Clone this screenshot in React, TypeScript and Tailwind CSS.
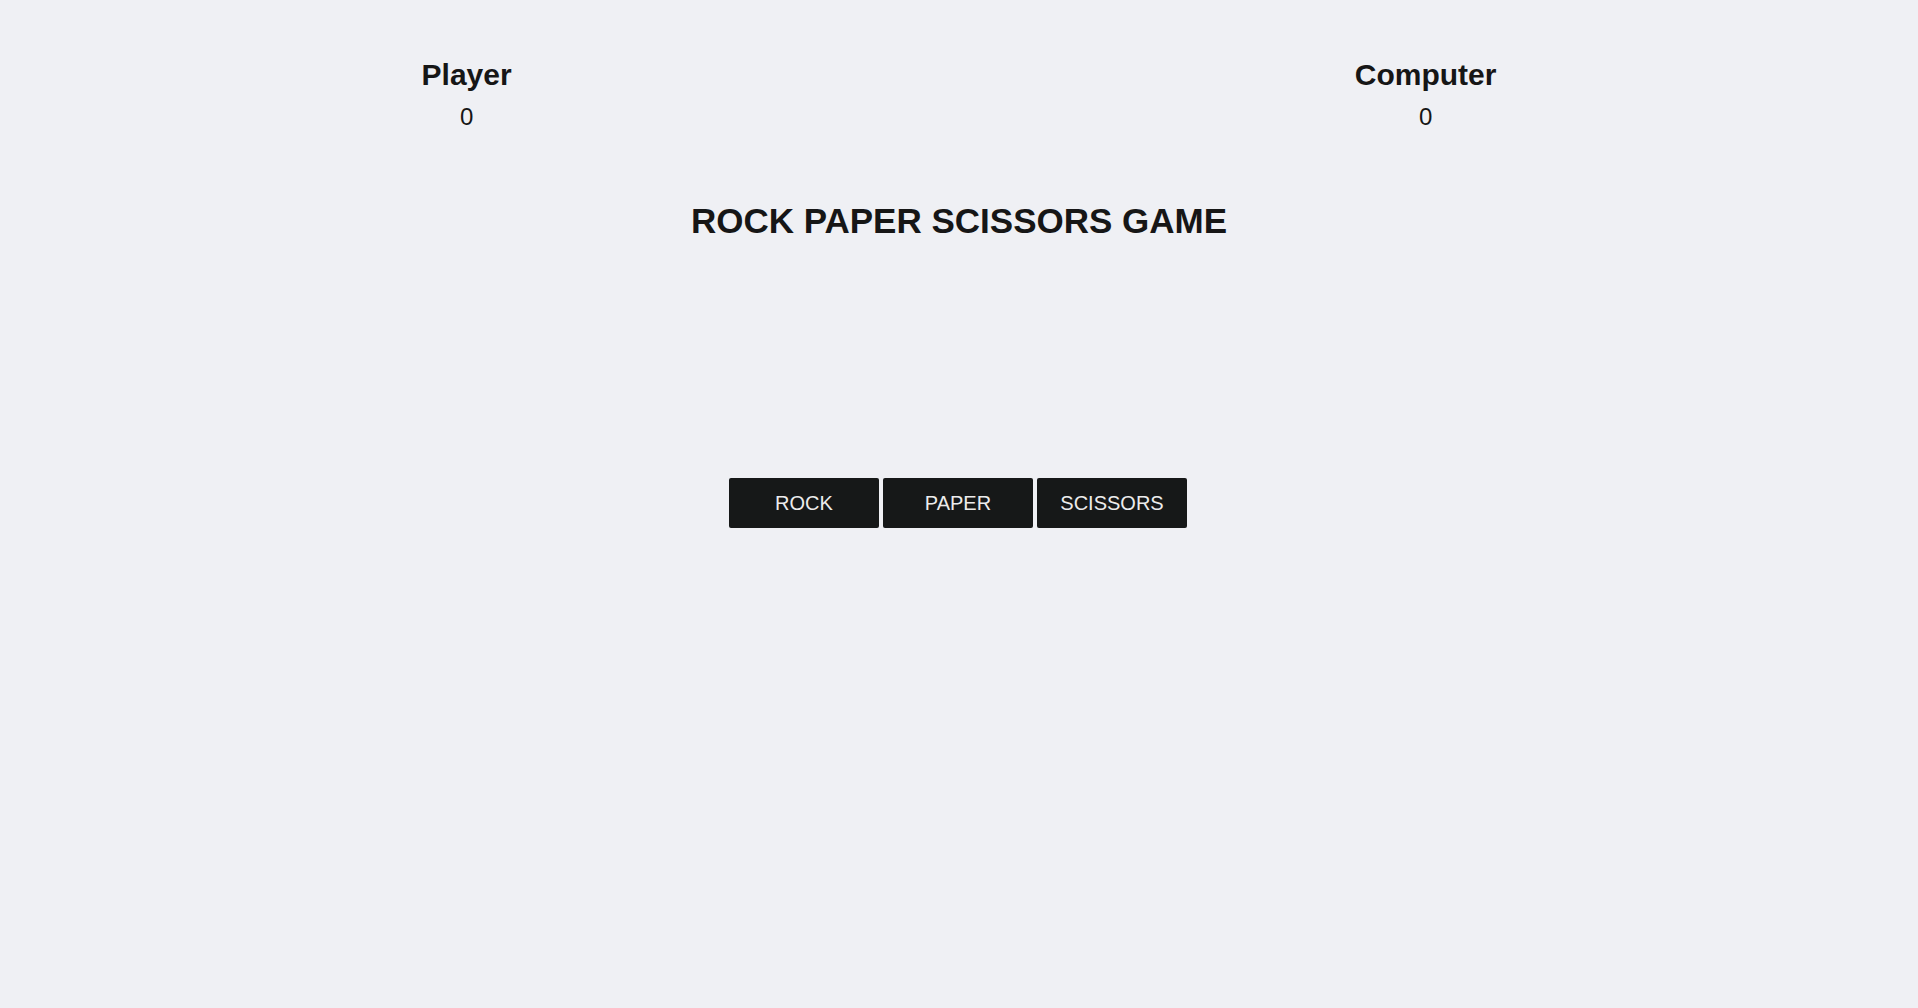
import React, { useState } from 'react';

const choices = ['ROCK', 'PAPER', 'SCISSORS'];

export default function App() {
  const [playerScore, setPlayerScore] = useState(0);
  const [computerScore, setComputerScore] = useState(0);
  const [result, setResult] = useState('');

  const play = (choice: string) => {
    const pick = choices[Math.floor(Math.random() * 3)];
    if (pick === choice) {
      setResult(`Both picked ${choice}. It's a tie!`);
      return;
    }
    const wins =
      (choice === 'ROCK' && pick === 'SCISSORS') ||
      (choice === 'PAPER' && pick === 'ROCK') ||
      (choice === 'SCISSORS' && pick === 'PAPER');
    if (wins) {
      setPlayerScore((s) => s + 1);
      setResult(`${choice} beats ${pick}. You win!`);
    } else {
      setComputerScore((s) => s + 1);
      setResult(`${pick} beats ${choice}. You lose!`);
    }
  };

  return (
    <div className="min-h-screen w-full bg-[#eff0f4] text-[#161616] font-['Liberation_Sans',Arial,sans-serif]">
      {/* Scoreboard */}
      <div className="flex justify-around pt-[58px]">
        <div className="flex flex-col items-center">
          <h2 className="text-[30px] font-bold leading-[1.15]">Player</h2>
          <p className="mt-[10px] text-[24px] leading-[1.15]">{playerScore}</p>
        </div>
        <div className="flex flex-col items-center">
          <h2 className="text-[30px] font-bold leading-[1.15]">Computer</h2>
          <p className="mt-[10px] text-[24px] leading-[1.15]">{computerScore}</p>
        </div>
      </div>

      <h1 className="mt-[71px] text-center text-[35px] font-bold leading-[1.15]">ROCK PAPER SCISSORS GAME</h1>

      <div className="flex h-[237px] items-center justify-center text-[22px]">{result}</div>

      <div className="flex justify-center gap-[4px] pr-[2px]">
        {choices.map((c) => (
          <button
            key={c}
            onClick={() => play(c)}
            className="h-[50px] w-[150px] rounded-[2px] bg-[#161818] text-[20px] text-[#ececec] hover:bg-[#2a2d2d]"
          >
            {c}
          </button>
        ))}
      </div>
    </div>
  );
}
